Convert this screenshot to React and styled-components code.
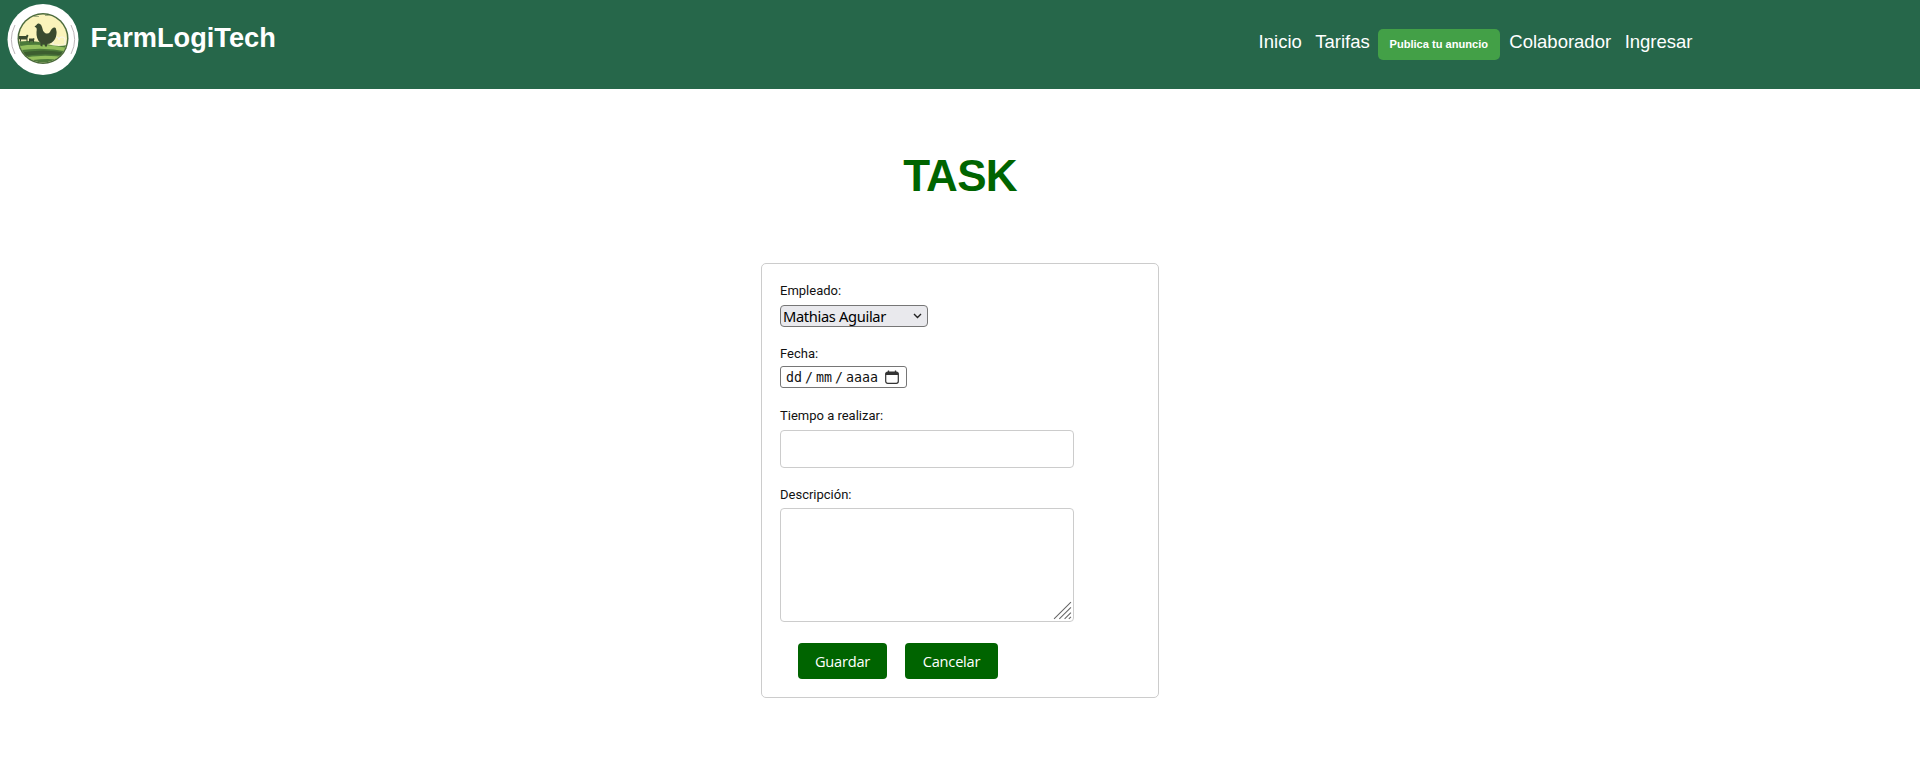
import React from "react";
import styled, { createGlobalStyle } from "styled-components";

const Global = createGlobalStyle`
  html, body { margin: 0; padding: 0; background: #fff; }
  body { font-family: "Liberation Sans", Arial, sans-serif; }
`;

const Page = styled.div`
  width: 1920px;
  height: 766px;
  overflow: hidden;
  display: flex;
  flex-direction: column;
`;
const Header = styled.header`
  height: 89px;
  flex: none;
  background: #26674a;
  display: flex;
  align-items: flex-start;
  justify-content: space-between;
  padding: 0 222px 0 7px;
  box-sizing: border-box;
`;
const Brand = styled.div`
  display: flex;
  align-items: flex-start;
  gap: 11.5px;
  padding-top: 3.5px;
`;
const BrandName = styled.span`
  color: #fff;
  font-size: 27.2px;
  font-weight: 700;
  line-height: 32px;
  margin-top: 18.5px;
`;
const Nav = styled.nav`
  display: flex;
  align-items: flex-start;
  gap: 2.5px;
  padding-top: 29px;
`;
const NavLink = styled.a`
  color: #fff;
  font-size: 18.5px;
  line-height: 26px;
  padding: 0 5.5px;
`;
const Publish = styled.a`
  background: #43a047;
  color: #fff;
  font-size: 11.1px;
  font-weight: 700;
  width: 122px;
  height: 31px;
  line-height: 31px;
  text-align: center;
  border-radius: 5px;
  margin-right: 1.5px;
`;
const Main = styled.main`
  flex: 1;
  display: flex;
  flex-direction: column;
  align-items: center;
`;
const Title = styled.h1`
  margin: 60px 0 0;
  color: #006400;
  font-size: 44px;
  letter-spacing: -0.7px;
  line-height: 54px;
  font-weight: 700;
  text-align: center;
`;
const Card = styled.form`
  margin-top: 60px;
  width: 398px;
  height: 435px;
  box-sizing: border-box;
  border: 1px solid #ccc;
  border-radius: 5px;
  padding: 18px 17px 0 18px;
  display: flex;
  flex-direction: column;
  align-items: flex-start;
`;
const Label = styled.label`
  display: block;
  font-family: Roboto, "Liberation Sans", sans-serif;
  font-size: 13px;
  line-height: 18px;
  color: #111;
  margin-bottom: ${p => p.$gap}px;
  margin-top: ${p => p.$top}px;
`;
const SelectWrap = styled.div`
  position: relative;
  width: 148px;
  height: 22px;
`;
const Select = styled.select`
  appearance: none;
  display: block;
  width: 100%;
  height: 100%;
  box-sizing: border-box;
  padding: 0 0 0 2px;
  font-family: "Noto Sans", "Open Sans", sans-serif;
  font-size: 14.7px;
  letter-spacing: -0.35px;
  color: #000;
  background-color: #e9e9ed;
  border: 1px solid #767676;
  border-radius: 4px;
`;
const Chevron = styled.svg`
  position: absolute;
  right: 6px;
  top: 8px;
  width: 9px;
  height: 6px;
`;
const DateBox = styled.div`
  width: 127px;
  height: 22px;
  box-sizing: border-box;
  border: 1px solid #767676;
  border-radius: 3px;
  display: flex;
  align-items: center;
  gap: 3px;
  padding: 0 0 0 5px;
  font-family: "DejaVu Sans Mono", monospace;
  font-size: 13.3px;
  color: #111;
`;
const CalendarIcon = styled.svg`
  flex: none;
  width: 14px;
  height: 14px;
  margin-left: 4px;
`;
const TextField = styled.input`
  display: block;
  width: 294px;
  height: 38px;
  box-sizing: border-box;
  border: 1px solid #ccc;
  border-radius: 4px;
  background: #fff;
  padding: 0 8px;
`;
const AreaWrap = styled.div`
  position: relative;
  width: 294px;
  height: 114px;
`;
const TextArea = styled.textarea`
  display: block;
  width: 100%;
  height: 100%;
  box-sizing: border-box;
  border: 1px solid #ccc;
  border-radius: 4px;
  background: #fff;
  resize: none;
  padding: 8px;
`;
const Grip = styled.svg`
  position: absolute;
  right: 2px;
  bottom: 2px;
  width: 19px;
  height: 19px;
`;
const Actions = styled.div`
  display: flex;
  gap: 18px;
  margin: 21px 0 0 18px;
`;
const Button = styled.button`
  height: 36px;
  width: ${p => p.$w}px;
  padding: 0;
  border: none;
  border-radius: 4px;
  background: #006400;
  color: #fff;
  font-family: "Open Sans", "Noto Sans", sans-serif;
  font-size: 14.6px;
  letter-spacing: -0.2px;
`;

const Logo = () => (
  <svg width="72" height="72" viewBox="0 0 72 72">
    <circle cx="36" cy="35.5" r="35.5" fill="#fff" />
    <path d="M8 21 A32 32 0 0 0 8 50" fill="none" stroke="#b5adb2" strokeWidth="0.9" />
    <path d="M64 21 A32 32 0 0 1 64 50" fill="none" stroke="#b5adb2" strokeWidth="0.9" />
    <circle cx="36" cy="34.5" r="25.5" fill="#4c6b3c" />
    <circle cx="36" cy="34.5" r="24" fill="#faf3bb" />
    <clipPath id="inner"><circle cx="36" cy="34.5" r="24" /></clipPath>
    <g clipPath="url(#inner)">
      <path d="M22 12.5 h10 M38 11.5 h8" stroke="#8d9a70" strokeWidth="0.8" />
      <path d="M46 36 a3 3 0 0 1 6 0 a3 3 0 0 1 6 0 v5 h-12 Z" fill="none" stroke="#f7f5e6" strokeWidth="1.1" />
      <path d="M8 38 Q26 35 40 40 Q52 44 64 40 V62 H8 Z" fill="#4c7a3a" />
      <path d="M8 43 Q28 38 62 44 V48 Q36 42 8 47 Z" fill="#93bf5d" />
      <path d="M8 50 Q36 43 64 50 V53 Q36 47 8 54 Z" fill="#3c5e30" />
      <path d="M10 55 Q36 49 62 54 V57 Q36 52 12 59 Z" fill="#93bf5d" />
    </g>
    <path d="M27.5 22.5 L29.5 21 Q30 19 32 19.5 Q34.5 20 35 23 Q35.5 27 38 29 Q41 30.5 43 28 Q44.5 24 47 23.5 Q49 23 49 25 Q50.5 30 48 35 Q45 40 40 40 L40 42.5 L38 42.5 L37.5 40 L35.5 40 L35.5 42.5 L33.5 42 L33.5 39 Q29 35 29.5 28 Q30 25.5 29.5 24 Z" fill="#3a4a2f" />
    <path d="M12 32 h7 l1-1.5 1.5 1 -1 2.5 v3.5 h-1 v-2 h-5.5 v2 h-1 v-2 l-1-.5 Z" fill="#3a4a2f" />
    <path d="M22 34.5 h4 l1-.5 .5 1 -.5 1.5 v2 h-1 v-1 h-3 v1 h-1 Z" fill="#3a4a2f" />
  </svg>
);

export default function App() {
  return (
    <Page>
      <Global />
      <Header>
        <Brand>
          <Logo />
          <BrandName>FarmLogiTech</BrandName>
        </Brand>
        <Nav>
          <NavLink>Inicio</NavLink>
          <NavLink>Tarifas</NavLink>
          <Publish>Publica tu anuncio</Publish>
          <NavLink>Colaborador</NavLink>
          <NavLink>Ingresar</NavLink>
        </Nav>
      </Header>
      <Main>
        <Title>TASK</Title>
        <Card>
          <Label $gap={5} $top={0}>Empleado:</Label>
          <SelectWrap>
            <Select defaultValue="m"><option value="m">Mathias Aguilar</option></Select>
            <Chevron viewBox="0 0 9 6"><path d="M1 1 L4.5 4.5 L8 1" fill="none" stroke="#222" strokeWidth="1.4" /></Chevron>
          </SelectWrap>
          <Label $gap={3} $top={18}>Fecha:</Label>
          <DateBox>
            <span>dd</span><span>/</span><span>mm</span><span>/</span><span>aaaa</span>
            <CalendarIcon viewBox="0 0 14 14">
              <rect x="0.7" y="2" width="12.6" height="11.3" rx="2" fill="none" stroke="#333" strokeWidth="1.2" />
              <path d="M0.7 5 H13.3 V3.5 Q13.3 2 11.5 2 H2.5 Q0.7 2 0.7 3.5 Z" fill="#333" />
              <path d="M3.5 .5 V2.5 M10.5 .5 V2.5" stroke="#333" strokeWidth="1.3" />
            </CalendarIcon>
          </DateBox>
          <Label $gap={5} $top={19}>Tiempo a realizar:</Label>
          <TextField type="text" />
          <Label $gap={4} $top={18}>Descripción:</Label>
          <AreaWrap>
            <TextArea />
            <Grip viewBox="0 0 18 18">
              <path d="M1 17 L17 1 M6 17 L17 6 M11 17 L17 11 M15 17 L17 15" stroke="#666" strokeWidth="1" fill="none" />
            </Grip>
          </AreaWrap>
          <Actions>
            <Button type="button" $w={89}>Guardar</Button>
            <Button type="button" $w={93}>Cancelar</Button>
          </Actions>
        </Card>
      </Main>
    </Page>
  );
}
